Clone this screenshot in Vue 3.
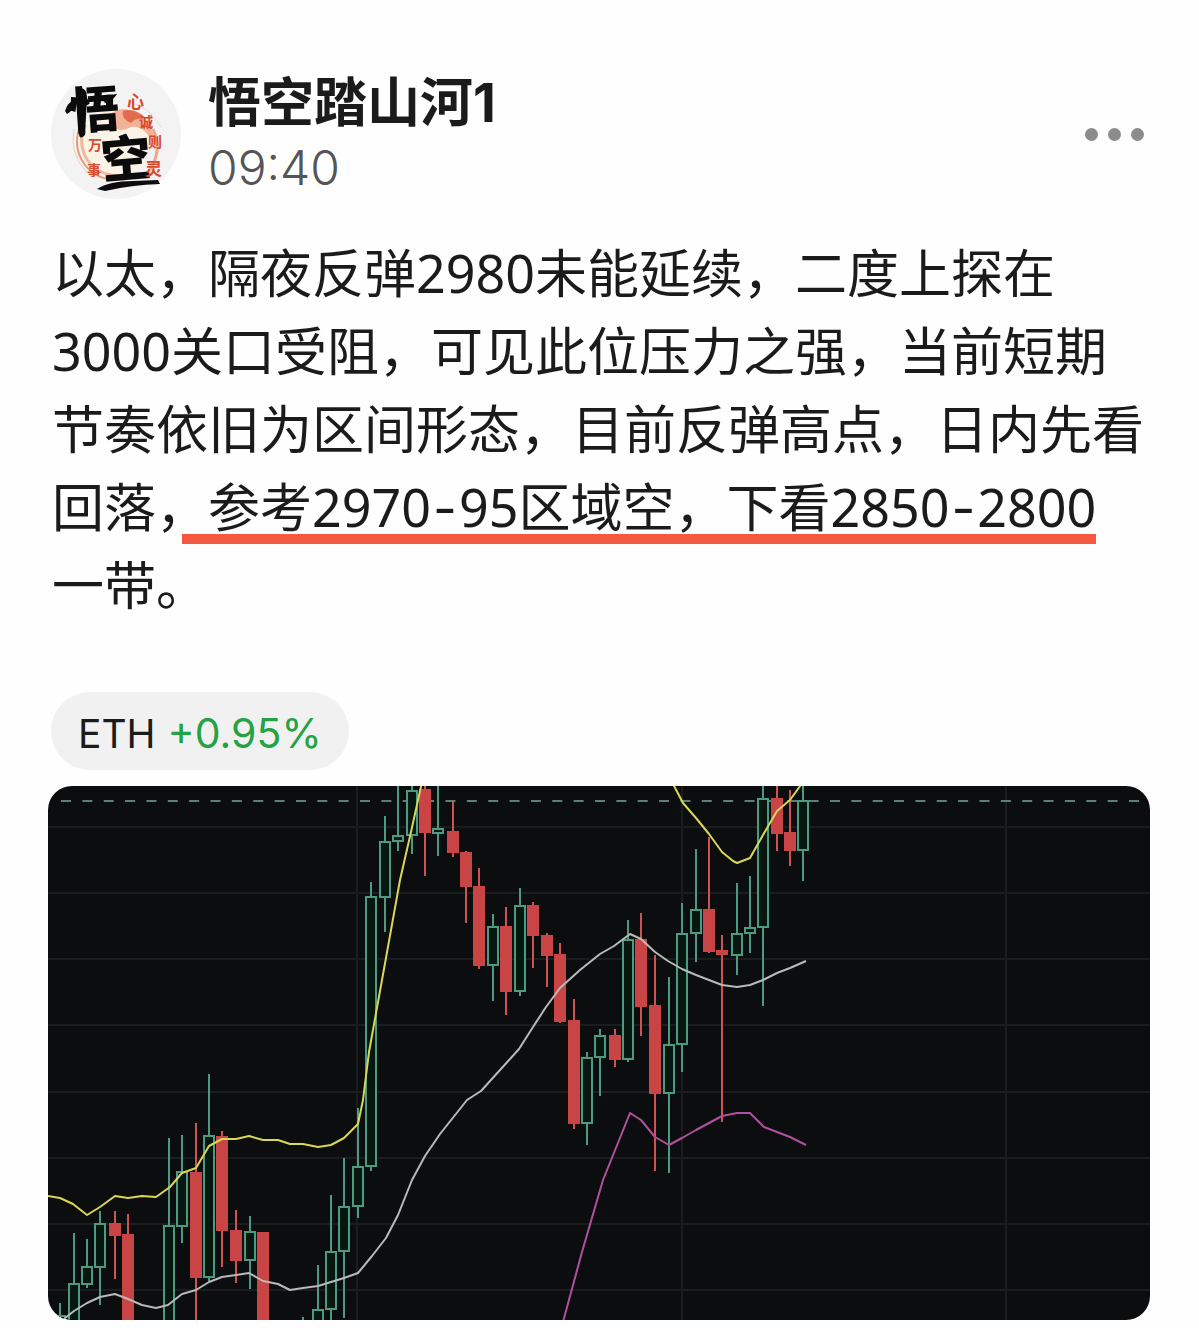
<script setup>
import { ref } from 'vue'

const post = ref({
  author: '悟空踏山河1',
  time: '09:40',
  symbol: 'ETH',
  change: '+0.95%',
})

const CANDLE_WIDTH = 10

const gridRows = [827, 893, 959, 1025, 1092, 1158, 1224, 1290]
const gridCols = [357, 682, 1006]

// [center x, wick top, wick bottom, body top, body bottom, direction]
const candles = [
  [60, 1303, 1325, 1316, 1325, 'up'],
  [74, 1233, 1325, 1284, 1325, 'up'],
  [87, 1239, 1288, 1267, 1284, 'up'],
  [100, 1211, 1305, 1224, 1267, 'up'],
  [115, 1211, 1279, 1224, 1235, 'down'],
  [128, 1214, 1325, 1235, 1325, 'down'],
  [169, 1138, 1325, 1226, 1325, 'up'],
  [182, 1135, 1243, 1172, 1226, 'up'],
  [196, 1123, 1325, 1173, 1277, 'down'],
  [209, 1074, 1281, 1136, 1277, 'up'],
  [222, 1131, 1267, 1137, 1230, 'down'],
  [236, 1210, 1283, 1231, 1260, 'down'],
  [250, 1216, 1289, 1232, 1260, 'up'],
  [263, 1232, 1325, 1233, 1325, 'down'],
  [303, 1317, 1325, 1324, 1325, 'up'],
  [318, 1265, 1325, 1310, 1325, 'up'],
  [331, 1195, 1325, 1252, 1309, 'up'],
  [344, 1158, 1318, 1207, 1251, 'up'],
  [358, 1108, 1218, 1167, 1206, 'up'],
  [371, 882, 1171, 897, 1166, 'up'],
  [385, 816, 932, 842, 897, 'up'],
  [398, 780, 851, 836, 841, 'up'],
  [412, 780, 854, 791, 835, 'up'],
  [425, 780, 876, 790, 832, 'down'],
  [438, 780, 856, 829, 833, 'up'],
  [453, 801, 857, 832, 852, 'down'],
  [466, 851, 923, 853, 886, 'down'],
  [479, 868, 969, 887, 965, 'down'],
  [493, 914, 1001, 927, 965, 'up'],
  [506, 907, 1015, 927, 991, 'down'],
  [520, 888, 996, 906, 991, 'up'],
  [533, 902, 968, 906, 935, 'down'],
  [547, 933, 987, 936, 955, 'down'],
  [560, 943, 1023, 955, 1021, 'down'],
  [574, 999, 1129, 1021, 1123, 'down'],
  [587, 1052, 1145, 1058, 1123, 'up'],
  [600, 1029, 1096, 1036, 1057, 'up'],
  [615, 1029, 1067, 1036, 1059, 'down'],
  [628, 920, 1062, 940, 1059, 'up'],
  [641, 913, 1036, 940, 1006, 'down'],
  [655, 955, 1171, 1006, 1093, 'down'],
  [669, 977, 1173, 1045, 1093, 'up'],
  [682, 903, 1072, 934, 1044, 'up'],
  [696, 849, 962, 910, 933, 'up'],
  [709, 837, 953, 910, 951, 'down'],
  [722, 935, 1122, 951, 954, 'down'],
  [737, 883, 975, 934, 955, 'up'],
  [750, 876, 953, 928, 933, 'up'],
  [763, 780, 1006, 799, 927, 'up'],
  [777, 780, 851, 799, 833, 'down'],
  [790, 790, 866, 833, 850, 'down'],
  [803, 780, 881, 801, 850, 'up'],
].map(([x, high, low, top, bottom, dir]) => ({ x, high, low, top, bottom, dir }))

const bands = [
  {
    name: 'upper',
    points: '48,1196 60,1198 73,1204 87,1215 100,1207 115,1196 128,1198 142,1196 156,1197 170,1187 182,1173 196,1168 209,1146 222,1139 236,1139 249,1136 263,1140 278,1140 290,1144 303,1144 318,1147 331,1145 344,1138 358,1124 363,1100 369,1052 382,980 400,880 411,832 422,782',
  },
  {
    name: 'upper',
    points: '672,782 683,803 696,818 709,834 722,852 733,861 737,863 750,858 763,835 777,811 790,800 803,782',
  },
  {
    name: 'middle',
    points: '60,1322 74,1311 87,1303 100,1297 115,1294 128,1299 142,1305 156,1308 168,1305 182,1294 196,1290 209,1282 222,1277 236,1275 249,1273 263,1281 278,1284 290,1290 303,1288 318,1286 331,1282 344,1278 358,1273 372,1256 386,1238 398,1215 412,1180 425,1156 440,1134 467,1100 481,1091 500,1070 519,1049 533,1027 546,1007 560,988 580,970 600,954 614,946 630,934 641,939 655,952 668,961 682,969 696,975 709,980 722,985 737,987 750,985 763,980 777,973 790,968 806,961',
  },
  {
    name: 'lower',
    points: '563,1322 582,1252 603,1180 630,1113 641,1120 655,1137 669,1145 682,1138 696,1130 722,1116 737,1113 750,1113 764,1127 777,1132 790,1137 806,1145',
  },
]
</script>

<template>
  <article class="post">
    <header class="post-header">
      <svg class="avatar" viewBox="0 0 130 130" role="img" aria-label="悟空">
        <circle cx="65" cy="65" r="65" fill="#f4f3f3" />
        <circle cx="64" cy="74" r="34" fill="#fbf3e6" />
        <path d="M58 46 Q72 34 88 46 Q104 56 103 76 Q94 56 80 58 Q70 64 62 58 Z" fill="#f0a184" opacity=".8" />
        <path d="M72 42 Q84 38 96 50 Q84 48 80 54 Q70 50 72 42 Z" fill="#dc5a38" opacity=".8" />
        <path d="M28 60 Q22 80 34 96 Q48 114 74 110" fill="none" stroke="#e89a78" stroke-width="2" />
        <path d="M34 56 Q25 78 40 96 Q54 110 82 106" fill="none" stroke="#f0b99c" stroke-width="3" />
        <path d="M23 60 Q18 84 36 104" fill="none" stroke="#f3cdb9" stroke-width="1" />
        <path d="M102 60 Q112 82 98 102" fill="none" stroke="#eda987" stroke-width="3" />
        <path d="M82 34 Q100 40 110 58" fill="none" stroke="#f6d9cc" stroke-width="1" />
        <g class="brush">
          <text x="18" y="59" transform="rotate(-4 44 40)">悟</text>
          <text x="50" y="108" transform="rotate(-5 74 90)">空</text>
          <path d="M46 120 Q58 112 82 112 L107 111 L109 115 Q80 116 54 122 Z" />
          <path d="M30 19 Q36 20 36 28 L34 66 Q28 72 28 64 Z" />
          <path d="M14 42 Q18 30 24 34 Q22 42 16 45 Z" />
          <path d="M52 31 Q62 24 66 25 Q62 32 54 34 Z" />
        </g>
        <g class="seal">
          <text x="76" y="39">心</text>
          <text x="88" y="58" class="small">诚</text>
          <text x="97" y="78" class="small">则</text>
          <text x="94" y="106">灵</text>
          <text x="37" y="81" class="small">万</text>
          <text x="36" y="106" class="small">事</text>
        </g>
      </svg>
      <div class="meta">
        <h1 class="author">{{ post.author }}</h1>
        <time class="time">{{ post.time }}</time>
      </div>
      <button class="more" type="button" aria-label="更多">
        <span class="dot" />
        <span class="dot" />
        <span class="dot" />
      </button>
    </header>

    <p class="content">以太，隔夜反弹2980未能延续，二度上探在3000关口受阻，可见此位压力之强，当前短期节奏依旧为区间形态，目前反弹高点，日内先看回落，<span class="marked">参考2970<span class="dash">-</span>95区域空，下看2850<span class="dash">-</span>2800</span>一带。</p>

    <a class="ticker" href="#">
      <span>{{ post.symbol }}</span>
      <span class="change">{{ post.change }}</span>
    </a>

    <svg class="chart" viewBox="48 786 1102 534" role="img" aria-label="ETH">
      <rect x="48" y="786" width="1102" height="534" fill="#0c0d0f" />
      <g class="grid">
        <line v-for="y in gridRows" :key="`r${y}`" x1="48" :y1="y" x2="1150" :y2="y" />
        <line v-for="x in gridCols" :key="`c${x}`" :x1="x" y1="786" :x2="x" y2="1320" />
      </g>
      <line class="price" x1="61" y1="801" x2="1150" y2="801" />
      <g v-for="c in candles" :key="c.x" :class="c.dir">
        <line :x1="c.x" :y1="c.high" :x2="c.x" :y2="c.low" />
        <rect
          :x="c.x - CANDLE_WIDTH / 2"
          :y="c.top"
          :width="CANDLE_WIDTH"
          :height="c.bottom - c.top"
        />
      </g>
      <polyline
        v-for="(band, i) in bands"
        :key="i"
        class="band"
        :class="band.name"
        :points="band.points"
      />
    </svg>
  </article>
</template>

<style>
body {
  margin: 0;
  background: #fefefe;
}
</style>

<style scoped>
.post {
  padding: 69px 49px 8px 48px;
  color: #1b1b1b;
  font-family: "Noto Sans", "Noto Sans CJK SC", sans-serif;
}

.post-header {
  display: flex;
  align-items: center;
  padding: 0 3px;
}

.avatar {
  flex: none;
  width: 130px;
  height: 130px;
}

.seal {
  fill: #d9482b;
  font: 700 17px "Noto Sans CJK SC", sans-serif;
}
.seal .small {
  font-size: 14px;
}

.brush {
  fill: #0b0b0b;
  font: 900 50px "Noto Sans CJK SC", sans-serif;
}

.meta {
  flex: 1;
  margin-left: 27px;
}

.author {
  margin: 0;
  font-family: Inter, "Noto Sans CJK SC", sans-serif;
  font-size: 53px;
  font-weight: 700;
  line-height: 68px;
}

.time {
  display: block;
  color: #555;
  font-family: Inter, sans-serif;
  font-size: 48px;
  font-weight: 300;
  line-height: 62px;
}

.more {
  display: flex;
  gap: 10px;
  padding: 10px 3px;
  border: 0;
  background: none;
  cursor: pointer;
}
.dot {
  width: 13px;
  height: 13px;
  border-radius: 50%;
  background: #8c8c8c;
}

.content {
  margin: 35px 4px 0;
  font-size: 52px;
  line-height: 78px;
}

/* starts under the second half of the comma before it */
.marked {
  position: relative;
}
.marked::after {
  content: "";
  position: absolute;
  right: 0;
  bottom: -2px;
  left: -26px;
  height: 10px;
  background: #f4583e;
}

.dash {
  padding: 0 2px;
  font-family: Inter, sans-serif;
  line-height: 1;
}

.ticker {
  display: flex;
  gap: 12px;
  align-items: center;
  width: fit-content;
  height: 78px;
  margin: 68px 3px 16px;
  padding: 4px 27px 0;
  box-sizing: border-box;
  border-radius: 39px;
  background: #f1f1f1;
  color: inherit;
  font-family: Inter, sans-serif;
  font-size: 39px;
  text-decoration: none;
}
.change {
  color: #25a244;
  font-size: 41px;
}

.chart {
  display: block;
  width: 100%;
  height: auto;
  border-radius: 24px;
}

.grid line {
  stroke: #1a1c1e;
  stroke-width: 2;
}
.price {
  stroke: #5d7f76;
  stroke-width: 2;
  stroke-dasharray: 10 11.36;
}

.up line,
.up rect {
  fill: #05170f;
  stroke: #4c9a82;
  stroke-width: 2;
}
.down line {
  stroke: #cf5350;
  stroke-width: 2;
}
.down rect {
  fill: #c94545;
  stroke: #c94545;
  stroke-width: 2;
}

.band {
  fill: none;
  stroke-width: 2;
  stroke-linejoin: round;
}
.upper {
  stroke: #d9d756;
}
.middle {
  stroke: #b9b9b9;
}
.lower {
  stroke: #b1509c;
}
</style>
